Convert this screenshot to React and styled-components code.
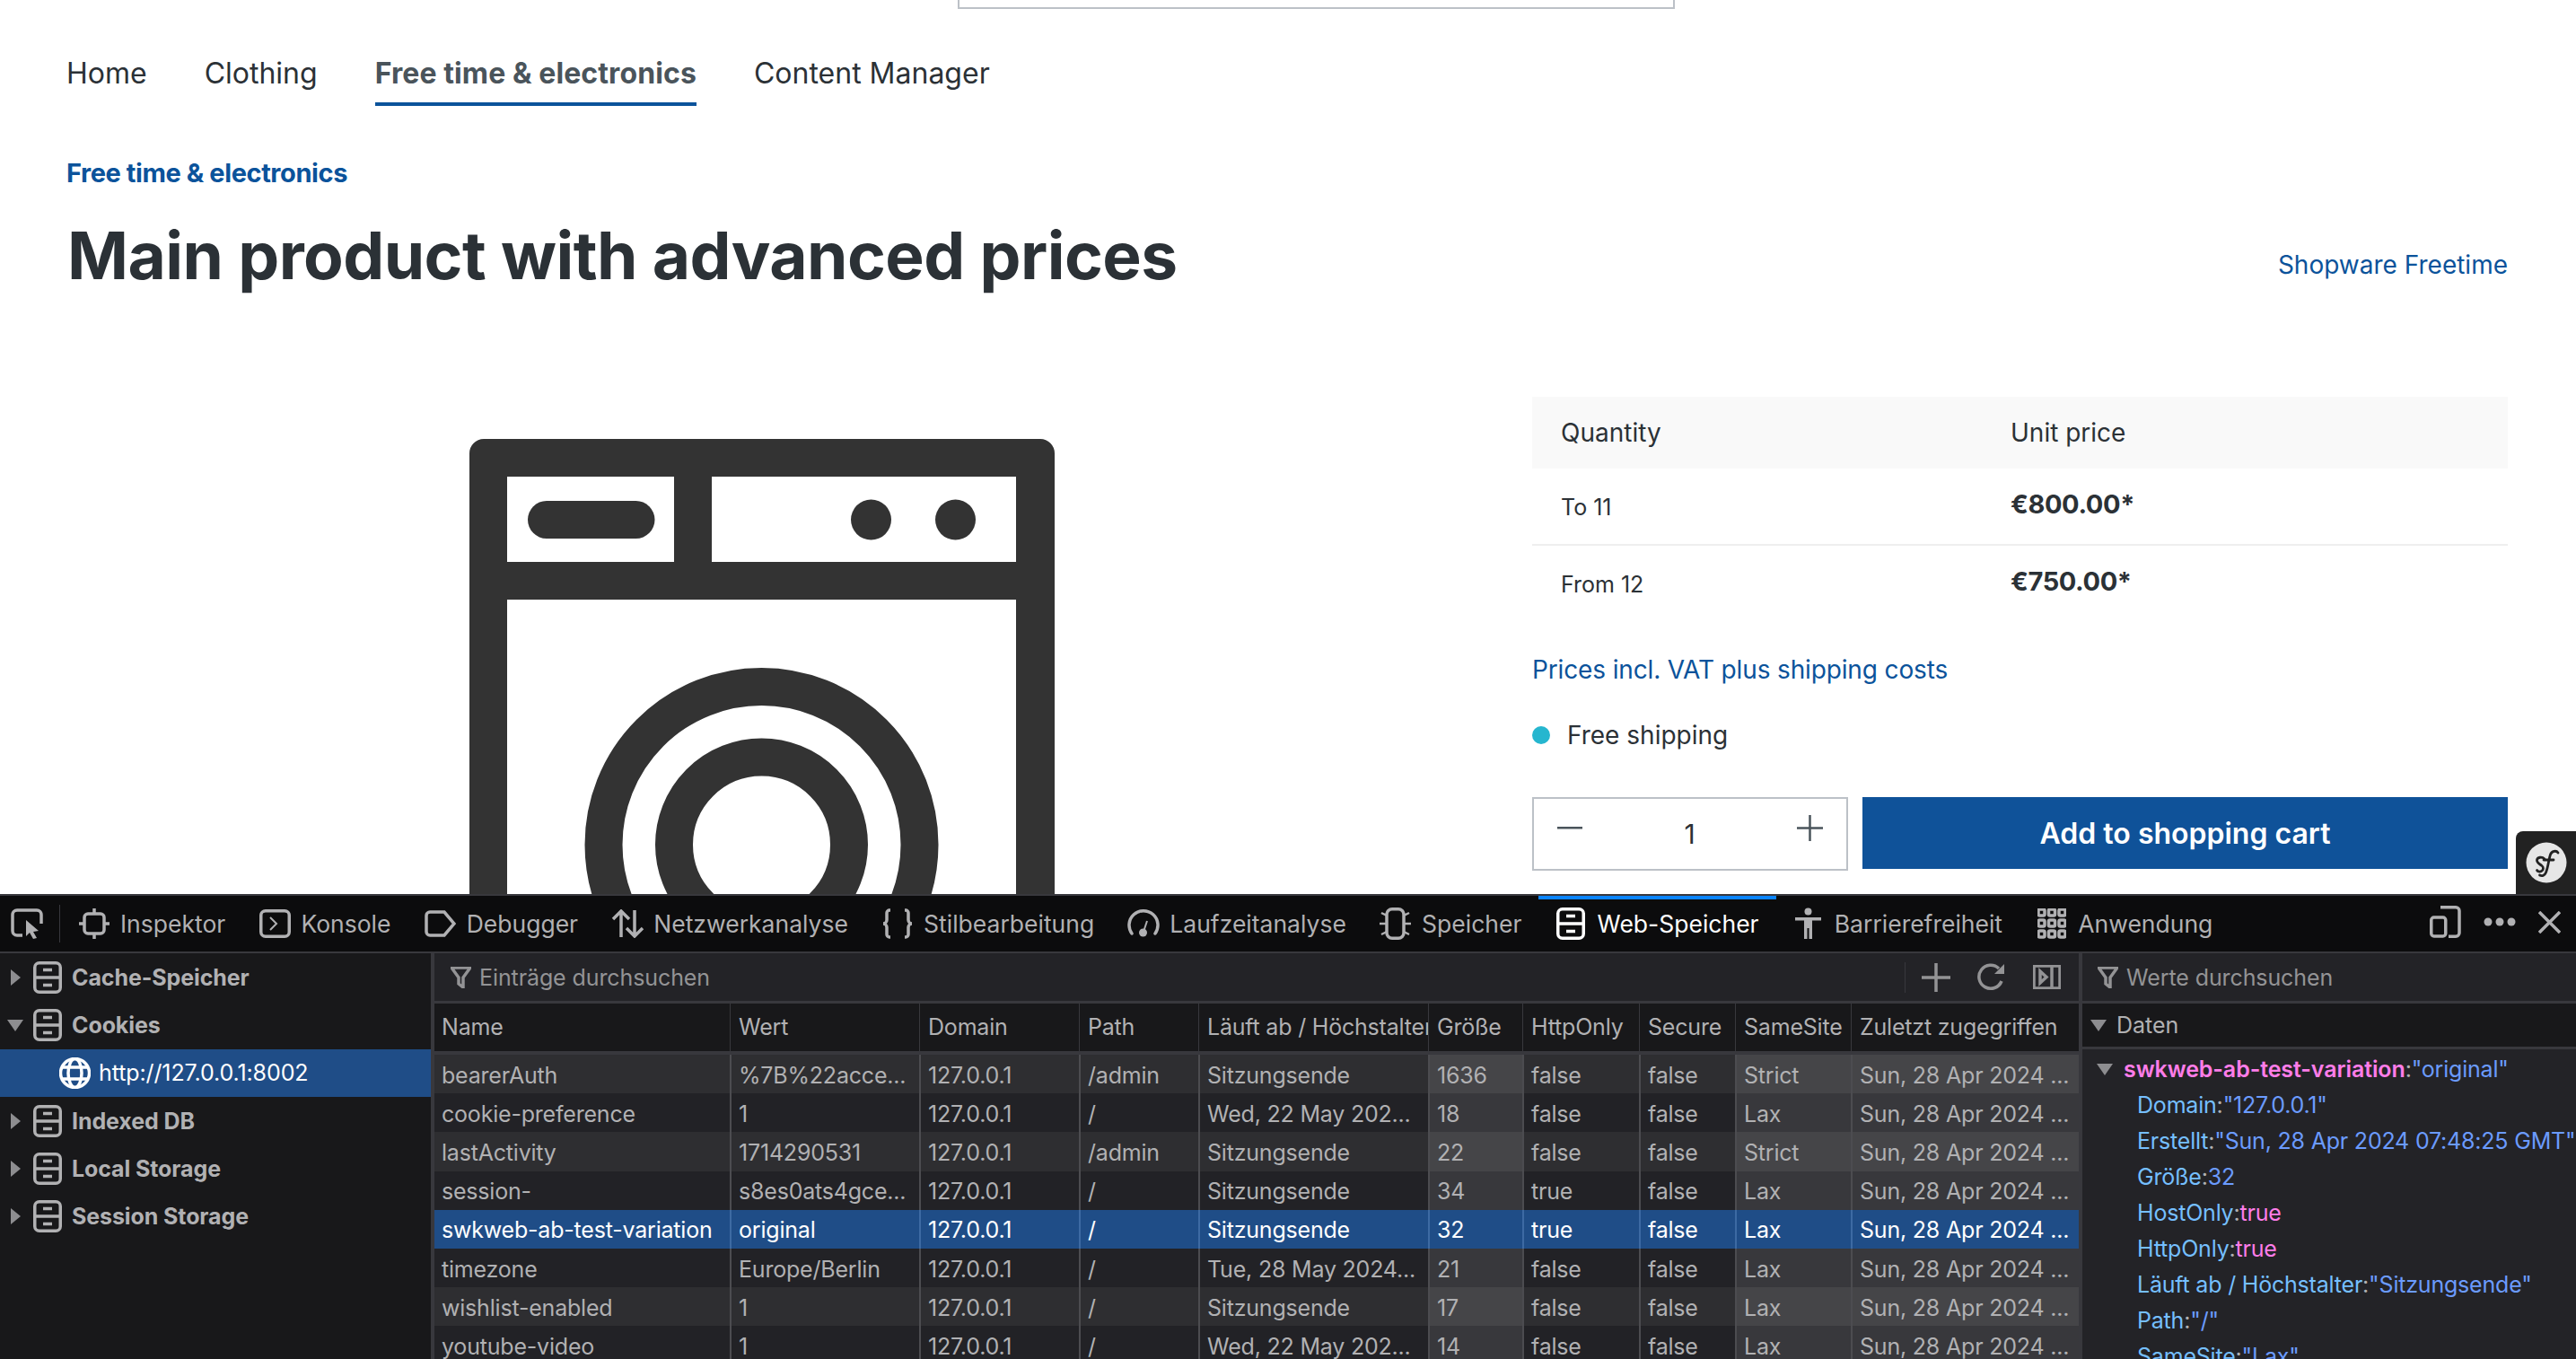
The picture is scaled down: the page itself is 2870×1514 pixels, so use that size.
import React from 'react';
import styled, { createGlobalStyle } from 'styled-components';

const GlobalStyle = createGlobalStyle`
  html, body {
    margin: 0;
    padding: 0;
    width: 2870px;
    height: 1514px;
    overflow: hidden;
    background: #fff;
    font-family: Inter, "Liberation Sans", sans-serif;
  }
  * { box-sizing: border-box; }
`;

const Page = styled.div`
  width: 2870px;
  height: 1514px;
  display: flex;
  flex-direction: column;
  overflow: hidden;
`;

/* shop page */
const Shop = styled.main`
  position: relative;
  height: 996px;
  flex: none;
  overflow: hidden;
  padding: 0 76px 0 75px;
  color: #2b3136;
`;

const SearchStub = styled.div`
  width: 799px;
  height: 10px;
  margin-left: 992px;
  border: 2.5px solid #bcc1c7;
  border-top: 0;
`;

const Nav = styled.nav`
  display: flex;
  gap: 64px;
  height: 108px;
  margin-left: -1px;
`;

const NavItem = styled.a`
  display: flex;
  align-items: center;
  height: 108px;
  padding-top: 38px;
  font-size: 32px;
  font-weight: ${(p) => (p.$active ? 700 : 400)};
  letter-spacing: ${(p) => (p.$active ? '0.1px' : '0')};
  color: ${(p) => (p.$active ? '#4a545b' : '#2b3136')};
  border-bottom: 4px solid ${(p) => (p.$active ? '#0b539b' : 'transparent')};
  white-space: nowrap;
`;

const Crumb = styled.div`
  margin: 57px 0 0 -1px;
  font-size: 29px;
  line-height: 36px;
  font-weight: 700;
  letter-spacing: -0.42px;
  color: #0b539b;
`;

const TitleRow = styled.div`
  display: flex;
  align-items: center;
  justify-content: space-between;
  margin-top: 29px;
  height: 90px;
`;

const Title = styled.h1`
  margin: 0;
  font-size: 73px;
  line-height: 90px;
  font-weight: 700;
  letter-spacing: -0.55px;
  color: #2b3136;
`;

const Maker = styled.a`
  font-size: 28px;
  margin-top: 20px;
  color: #0b539b;
`;

const Content = styled.div`
  display: flex;
  margin-top: 112px;
`;

const Gallery = styled.div`
  width: 1632px;
  flex: none;
  padding-top: 47px;
  padding-left: 448px;
`;

const Buy = styled.section`
  width: 1087px;
  flex: none;
`;

const PriceHead = styled.div`
  display: grid;
  grid-template-columns: 501px 1fr;
  align-items: center;
  height: 80px;
  padding-left: 32px;
  background: #f9f9f9;
  font-size: 28px;
`;

const PriceRow = styled.div`
  display: grid;
  grid-template-columns: 501px 1fr;
  height: ${(p) => p.$h}px;
  padding-left: 32px;
  align-items: center;
  border-bottom: ${(p) => (p.$line ? '2px solid #eeeeee' : 0)};
`;

const PriceFrom = styled.span`
  font-size: 25px;
  padding-top: 2px;
`;

const PriceValue = styled.b`
  font-size: 29px;
  font-weight: 700;
  letter-spacing: -0.4px;
  padding-bottom: 5px;
`;

const TaxLink = styled.a`
  display: block;
  margin-top: 36px;
  font-size: 28px;
  line-height: 36px;
  letter-spacing: -0.14px;
  color: #0b539b;
`;

const Delivery = styled.div`
  display: flex;
  align-items: center;
  gap: 19px;
  margin-top: 37px;
  font-size: 28px;
  line-height: 36px;
`;

const Dot = styled.i`
  width: 20px;
  height: 20px;
  border-radius: 50%;
  background: #26b6cf;
`;

const BuyRow = styled.div`
  display: flex;
  gap: 16px;
  margin-top: 51px;
`;

const Stepper = styled.div`
  position: relative;
  width: 352px;
  height: 82px;
  display: flex;
  align-items: center;
  justify-content: space-between;
  padding: 0 26px;
  border: 2.5px solid #bcc1c7;
`;

const StepValue = styled.span`
  font-size: 30px;
`;

const CartButton = styled.button`
  width: 719px;
  height: 80px;
  border: 0;
  background: #0f5299;
  color: #fff;
  font-family: inherit;
  font-size: 32px;
  font-weight: 600;
`;

const SfBar = styled.div`
  position: absolute;
  right: 0;
  bottom: 0;
  width: 67px;
  height: 70px;
  display: flex;
  align-items: center;
  justify-content: center;
  background: #222;
  border-top-left-radius: 8px;
`;

/* devtools */
const Dev = styled.section`
  flex: 1;
  display: flex;
  flex-direction: column;
  background: #18181a;
  border-top: 2px solid #38383d;
  color: #b1b1b3;
  font-size: 25px;
  overflow: hidden;
`;

const Tabs = styled.div`
  height: 64px;
  flex: none;
  display: flex;
  align-items: center;
  background: #0c0c0d;
  border-bottom: 2px solid #38383d;
  padding-left: 12px;
  font-size: 26.5px;
`;

const Pick = styled.div`
  display: flex;
  align-items: center;
  height: 42px;
  padding-right: 18px;
  margin-right: 1.8px;
  border-right: 1px solid #38383d;
`;

const Tab = styled.div`
  display: flex;
  align-items: center;
  height: 62px;
  gap: 12.2px;
  padding: 0 19px 4px;
  white-space: nowrap;
  color: ${(p) => (p.$active ? '#fff' : '#b1b1b3')};
  border-top: 4px solid ${(p) => (p.$active ? '#0a84ff' : 'transparent')};
`;

const TabIcon = styled.span`
  width: 34px;
  display: flex;
  justify-content: center;
`;

const TabEnd = styled.div`
  margin-left: auto;
  display: flex;
  align-items: center;
  gap: 25px;
  padding-right: 17px;
  padding-bottom: 4px;
`;

const Panes = styled.div`
  flex: 1;
  display: grid;
  grid-template-columns: 480px 1832px 550px;
  column-gap: 4px;
  background: #38383d;
  min-height: 0;
`;

const Tree = styled.aside`
  background: #18181a;
`;

const TreeRow = styled.div`
  height: 53.3px;
  display: flex;
  align-items: center;
  gap: ${(p) => (p.$child ? 9 : 11)}px;
  padding-left: ${(p) => (p.$child ? 66 : 8)}px;
  font-weight: ${(p) => (p.$child ? 400 : 700)};
  background: ${(p) => (p.$child ? '#1f4d87' : 'transparent')};
  color: ${(p) => (p.$child ? '#fff' : '#b1b1b3')};
  letter-spacing: -0.1px;
`;

const Column = styled.div`
  display: flex;
  flex-direction: column;
  background: #232327;
  min-width: 0;
  overflow: hidden;
`;

const SearchBar = styled.div`
  height: 56px;
  flex: none;
  display: flex;
  align-items: center;
  gap: 9px;
  padding-left: ${(p) => p.$pad}px;
  background: #232327;
  color: #939395;
  letter-spacing: -0.1px;
  border-bottom: 3px solid #38383d;
`;

const BarTools = styled.div`
  margin-left: auto;
  display: flex;
  align-items: center;
  gap: 30px;
  padding-left: 18px;
  padding-right: 20px;
  height: 34px;
  border-left: 1px solid #38383d;
`;

const TableGrid = styled.div`
  display: grid;
  grid-template-columns: 329px 211px 178px 133px 256px 105px 130px 107px 129px 254px;
  letter-spacing: -0.2px;
`;

const HeadCell = styled.div`
  height: 57px;
  display: flex;
  align-items: center;
  padding: 0 0 2px ${(p) => (p.$first ? 8 : 10)}px;
  background: #18181a;
  white-space: nowrap;
  overflow: hidden;
  border-bottom: 4px solid #38383d;
  box-shadow: inset ${(p) => (p.$first ? 0 : 1)}px 0 0 #38383d;
`;

const Cell = styled.div`
  height: 43.2px;
  display: flex;
  align-items: center;
  padding: 2px 0 0 ${(p) => (p.$first ? 8 : 10)}px;
  white-space: nowrap;
  overflow: hidden;
  background: ${(p) => {
    if (p.$selected) return '#1f4d87';
    if (p.$lit) return p.$odd ? '#454548' : '#38383c';
    return p.$odd ? '#2e2e31' : '#222226';
  }};
  color: ${(p) => (p.$selected ? '#fff' : '#b1b1b3')};
  box-shadow: inset ${(p) => (p.$first ? 0 : 2)}px 0 0 ${(p) => (p.$selected ? '#3d6aa3' : '#4c4c50')};
`;

const DataHead = styled.div`
  height: 51px;
  flex: none;
  display: flex;
  align-items: center;
  gap: 11px;
  padding-left: 9px;
  background: #18181a;
  border-bottom: 3px solid #38383d;
`;

const DataList = styled.div`
  padding-top: 2px;
  letter-spacing: -0.2px;
`;

const DataLine = styled.div`
  height: 40px;
  display: flex;
  align-items: center;
  white-space: nowrap;
  padding-left: ${(p) => (p.$root ? 16 : 61)}px;
  gap: ${(p) => (p.$root ? 12 : 0)}px;
  color: #b1b1b3;
`;

const Key = styled.span`
  color: ${(p) => (p.$root ? '#ff7de9' : '#75bfff')};
  font-weight: ${(p) => (p.$root ? 600 : 400)};
  letter-spacing: ${(p) => (p.$root ? '-0.1px' : 'inherit')};
`;

const Val = styled.span`
  color: ${(p) => (p.$bool ? '#ff7de9' : '#6b9bff')};
`;

const Ico = styled.svg`
  flex: none;
  display: block;
  fill: none;
  stroke: currentColor;
  stroke-width: 3.5;
`;

const Arrow = ({ open }) => (
  <svg width="18" height="18" viewBox="0 0 18 18" style={{ flex: 'none' }}>
    {open ? <path d="M0 3h18L9 16z" fill="#8d8d90" /> : <path d="M4 0l11 9-11 9z" fill="#8d8d90" />}
  </svg>
);

const StorageIcon = () => (
  <Ico width="32" height="36" viewBox="0 0 32 36">
    <rect x="1.750" y="1.750" width="28.500" height="32.500" rx="5" />
    <path d="M2 18h28M11 9.500h10M11 26.500h10" />
  </Ico>
);

const PickIcon = () => (
  <Ico width="36" height="34" viewBox="0 0 36 34">
    <path d="M13 30H7a5 5 0 0 1-5-5V7a5 5 0 0 1 5-5h22a5 5 0 0 1 5 5v10" />
    <path d="M17 13l14 12-6 1 4 7-4 1-4-7-4 4z" fill="currentColor" stroke="none" />
  </Ico>
);

const InspectorIcon = () => (
  <Ico width="34" height="34" viewBox="0 0 34 34">
    <rect x="6" y="6" width="22" height="22" rx="4" />
    <path d="M17 0v6M17 28v6M0 17h6M28 17h6" />
  </Ico>
);

const ConsoleIcon = () => (
  <Ico width="35" height="32" viewBox="0 0 35 32">
    <rect x="1.750" y="1.750" width="31.500" height="28.500" rx="5" />
    <path d="M12 9l7 7-7 7" strokeWidth="2" />
  </Ico>
);

const DebuggerIcon = () => (
  <Ico width="35" height="30" viewBox="0 0 35 30">
    <path d="M6 2h16l11 13-11 13H6a4 4 0 0 1-4-4V6a4 4 0 0 1 4-4z" />
  </Ico>
);

const NetworkIcon = () => (
  <Ico width="37" height="32" viewBox="0 0 37 32">
    <path d="M11 31V2M2 11l9-9 9 9M26 1v29M17 21l9 9 9-9" />
  </Ico>
);

const BracesIcon = () => (
  <Ico width="34" height="34" viewBox="0 0 34 34">
    <path d="M9 2H8a3 3 0 0 0-3 3v8c0 2-2 4-4 4 2 0 4 2 4 4v8a3 3 0 0 0 3 3h1M25 2h1a3 3 0 0 1 3 3v8c0 2 2 4 4 4-2 0-4 2-4 4v8a3 3 0 0 1-3 3h-1" />
  </Ico>
);

const GaugeIcon = () => (
  <Ico width="36" height="34" viewBox="0 0 36 34">
    <path d="M5 28A16 16 0 1 1 31 28" strokeLinecap="round" />
    <path d="M18 26l4-12" strokeWidth="2" />
    <circle cx="17.500" cy="27" r="4.500" fill="currentColor" stroke="none" />
  </Ico>
);

const MemoryIcon = () => (
  <Ico width="37" height="36" viewBox="0 0 37 36">
    <rect x="9" y="1.750" width="19" height="32.500" rx="6" />
    <path d="M9 9L3 6M9 18H1M9 27l-6 3M28 9l6-3M28 18h8M28 27l6 3" strokeWidth="2.500" />
  </Ico>
);

const AccessIcon = () => (
  <svg width="31" height="36" viewBox="0 0 31 36" fill="currentColor" style={{ flex: 'none' }}>
    <circle cx="15.500" cy="4.500" r="4" />
    <path d="M1 11h29v3.500H20V35h-3.500V23h-2v12H11V14.500H1z" />
  </svg>
);

const AppIcon = () => (
  <Ico width="32" height="34" viewBox="0 0 32 34" strokeWidth="2">
    {[1, 12.500, 24].map((x) =>
      [1, 13, 25].map((y) => <rect key={`${x}-${y}`} x={x} y={y} width="7" height="7" rx="1.500" />)
    )}
  </Ico>
);

const DeviceIcon = () => (
  <Ico width="35" height="36" viewBox="0 0 35 36">
    <path d="M12 1.750h17a4 4 0 0 1 4 4v24.500a4 4 0 0 1-4 4H21" />
    <rect x="1.750" y="13" width="16" height="21" rx="3" />
  </Ico>
);

const DotsIcon = () => (
  <svg width="36" height="10" viewBox="0 0 36 10" fill="currentColor" style={{ flex: 'none' }}>
    <circle cx="5" cy="5" r="4.500" />
    <circle cx="18" cy="5" r="4.500" />
    <circle cx="31" cy="5" r="4.500" />
  </svg>
);

const CloseIcon = () => (
  <Ico width="25" height="25" viewBox="0 0 25 25" strokeWidth="3">
    <path d="M1 1l23 23M24 1L1 24" />
  </Ico>
);

const FilterIcon = () => (
  <Ico width="23" height="24" viewBox="0 0 23 24" strokeWidth="2">
    <path d="M1 1h21l-8 11v11l-5-4v-7z" />
  </Ico>
);

const GlobeIcon = () => (
  <Ico width="35" height="35" viewBox="0 0 35 35" strokeWidth="3">
    <circle cx="17.500" cy="17.500" r="16" />
    <ellipse cx="17.500" cy="17.500" rx="7.500" ry="16" />
    <path d="M3 11h29M3 24h29" />
  </Ico>
);

const PlusIcon = () => (
  <Ico width="32" height="32" viewBox="0 0 32 32">
    <path d="M16 0v32M0 16h32" />
  </Ico>
);

const ReloadIcon = () => (
  <Ico width="32" height="32" viewBox="0 0 32 32">
    <path d="M27 20a13 13 0 1 1-3-14" />
    <path d="M30 1v11H19z" fill="currentColor" stroke="none" />
  </Ico>
);

const SideIcon = () => (
  <Ico width="31" height="27" viewBox="0 0 31 27" strokeWidth="2">
    <rect x="1" y="1" width="29" height="25" />
    <path d="M21 1v25M8 7l7 6.500L8 20z" />
  </Ico>
);

const Washer = () => (
  <svg width="652" height="640" viewBox="0 0 652 640" style={{ display: 'block' }}>
    <path
      fillRule="evenodd"
      fill="#333"
      d="M16 0h620a16 16 0 0 1 16 16v624H0V16A16 16 0 0 1 16 0zM42 42v95h186V42zM270 42v95h339V42zM42 179v461h567V179z"
    />
    <rect x="65" y="69" width="141.500" height="42" rx="21" fill="#333" />
    <circle cx="447.500" cy="90" r="22.500" fill="#333" />
    <circle cx="541.500" cy="90" r="22.500" fill="#333" />
    <circle cx="325.500" cy="452" r="176" fill="none" stroke="#333" strokeWidth="42" />
    <circle cx="325.500" cy="452" r="97.500" fill="none" stroke="#333" strokeWidth="42" />
  </svg>
);

const SfLogo = () => (
  <svg width="46" height="46" viewBox="0 0 46 46">
    <circle cx="23" cy="23" r="22.500" fill="#e6e6e6" />
    <path
      fill="none"
      stroke="#222"
      strokeWidth="2.800"
      strokeLinecap="round"
      d="M36 12c-2-3-7-2-8.500 2-1.800 5-2.500 14-5 20-1.200 3-4 4.500-7 3M21 19c-3-3-8-2-8.500 1-.5 3 3 4.500 5.500 6.500 2 1.500 2 5-.5 6-2 1-4.500.5-5-1M20 20h11"
    />
  </svg>
);

const Minus = () => (
  <svg width="28" height="3" viewBox="0 0 28 3" style={{ marginBottom: 14 }}>
    <rect width="28" height="2.500" fill="#4a545b" />
  </svg>
);

const Plus = () => (
  <svg width="29" height="29" viewBox="0 0 29 29" style={{ marginBottom: 14 }}>
    <path d="M14.500 0v29M0 14.500h29" stroke="#4a545b" strokeWidth="2.500" />
  </svg>
);

const NAV = ['Home', 'Clothing', 'Free time & electronics', 'Content Manager'];

const TABS = [
  ['Inspektor', InspectorIcon],
  ['Konsole', ConsoleIcon],
  ['Debugger', DebuggerIcon],
  ['Netzwerkanalyse', NetworkIcon],
  ['Stilbearbeitung', BracesIcon],
  ['Laufzeitanalyse', GaugeIcon],
  ['Speicher', MemoryIcon],
  ['Web-Speicher', StorageIcon, true],
  ['Barrierefreiheit', AccessIcon],
  ['Anwendung', AppIcon],
];

const HEADS = ['Name', 'Wert', 'Domain', 'Path', 'Läuft ab / Höchstalter', 'Größe', 'HttpOnly', 'Secure', 'SameSite', 'Zuletzt zugegriffen'];

const LAST = 'Sun, 28 Apr 2024 ...';
const ROWS = [
  ['bearerAuth', '%7B%22acce...', '127.0.0.1', '/admin', 'Sitzungsende', '1636', 'false', 'false', 'Strict', LAST],
  ['cookie-preference', '1', '127.0.0.1', '/', 'Wed, 22 May 202...', '18', 'false', 'false', 'Lax', LAST],
  ['lastActivity', '1714290531', '127.0.0.1', '/admin', 'Sitzungsende', '22', 'false', 'false', 'Strict', LAST],
  ['session-', 's8es0ats4gce...', '127.0.0.1', '/', 'Sitzungsende', '34', 'true', 'false', 'Lax', LAST],
  ['swkweb-ab-test-variation', 'original', '127.0.0.1', '/', 'Sitzungsende', '32', 'true', 'false', 'Lax', LAST],
  ['timezone', 'Europe/Berlin', '127.0.0.1', '/', 'Tue, 28 May 2024...', '21', 'false', 'false', 'Lax', LAST],
  ['wishlist-enabled', '1', '127.0.0.1', '/', 'Sitzungsende', '17', 'false', 'false', 'Lax', LAST],
  ['youtube-video', '1', '127.0.0.1', '/', 'Wed, 22 May 202...', '14', 'false', 'false', 'Lax', LAST],
];

const LIT_COLUMNS = [5, 8, 9];

const DATA = [
  ['Domain', '"127.0.0.1"'],
  ['Erstellt', '"Sun, 28 Apr 2024 07:48:25 GMT"'],
  ['Größe', '32'],
  ['HostOnly', 'true', true],
  ['HttpOnly', 'true', true],
  ['Läuft ab / Höchstalter', '"Sitzungsende"'],
  ['Path', '"/"'],
  ['SameSite', '"Lax"'],
];

export default function App() {
  return (
    <Page>
      <GlobalStyle />
      <Shop>
        <SearchStub />
        <Nav>
          {NAV.map((item) => (
            <NavItem key={item} $active={item === 'Free time & electronics'}>
              {item}
            </NavItem>
          ))}
        </Nav>
        <Crumb>Free time &amp; electronics</Crumb>
        <TitleRow>
          <Title>Main product with advanced prices</Title>
          <Maker>Shopware Freetime</Maker>
        </TitleRow>
        <Content>
          <Gallery>
            <Washer />
          </Gallery>
          <Buy>
            <PriceHead>
              <span>Quantity</span>
              <span>Unit price</span>
            </PriceHead>
            <PriceRow $h={86} $line>
              <PriceFrom>To 11</PriceFrom>
              <PriceValue>€800.00*</PriceValue>
            </PriceRow>
            <PriceRow $h={84}>
              <PriceFrom>From 12</PriceFrom>
              <PriceValue>€750.00*</PriceValue>
            </PriceRow>
            <TaxLink>Prices incl. VAT plus shipping costs</TaxLink>
            <Delivery>
              <Dot />
              Free shipping
            </Delivery>
            <BuyRow>
              <Stepper>
                <Minus />
                <StepValue>1</StepValue>
                <Plus />
              </Stepper>
              <CartButton>Add to shopping cart</CartButton>
            </BuyRow>
          </Buy>
        </Content>
        <SfBar>
          <SfLogo />
        </SfBar>
      </Shop>
      <Dev>
        <Tabs>
          <Pick>
            <PickIcon />
          </Pick>
          {TABS.map(([label, Icon, active]) => (
            <Tab key={label} $active={active}>
              <TabIcon>
                <Icon />
              </TabIcon>
              {label}
            </Tab>
          ))}
          <TabEnd>
            <DeviceIcon />
            <DotsIcon />
            <CloseIcon />
          </TabEnd>
        </Tabs>
        <Panes>
          <Tree>
            {['Cache-Speicher', 'Cookies'].map((label) => (
              <TreeRow key={label}>
                <Arrow open={label === 'Cookies'} />
                <StorageIcon />
                {label}
              </TreeRow>
            ))}
            <TreeRow $child>
              <GlobeIcon />
              http://127.0.0.1:8002
            </TreeRow>
            {['Indexed DB', 'Local Storage', 'Session Storage'].map((label) => (
              <TreeRow key={label}>
                <Arrow />
                <StorageIcon />
                {label}
              </TreeRow>
            ))}
          </Tree>
          <Column>
            <SearchBar $pad={18}>
              <FilterIcon />
              Einträge durchsuchen
              <BarTools>
                <PlusIcon />
                <ReloadIcon />
                <SideIcon />
              </BarTools>
            </SearchBar>
            <TableGrid>
              {HEADS.map((head, i) => (
                <HeadCell key={head} $first={i === 0}>
                  {head}
                </HeadCell>
              ))}
              {ROWS.map((row, r) =>
                row.map((value, c) => (
                  <Cell
                    key={`${r}-${c}`}
                    $first={c === 0}
                    $odd={r % 2 === 0}
                    $selected={r === 4}
                    $lit={LIT_COLUMNS.includes(c)}
                  >
                    {value}
                  </Cell>
                ))
              )}
            </TableGrid>
          </Column>
          <Column>
            <SearchBar $pad={17}>
              <FilterIcon />
              Werte durchsuchen
            </SearchBar>
            <DataHead>
              <Arrow open />
              Daten
            </DataHead>
            <DataList>
              <DataLine $root>
                <Arrow open />
                <span>
                  <Key $root>swkweb-ab-test-variation</Key>:<Val>"original"</Val>
                </span>
              </DataLine>
              {DATA.map(([key, value, bool]) => (
                <DataLine key={key}>
                  <Key>{key}</Key>:<Val $bool={bool}>{value}</Val>
                </DataLine>
              ))}
            </DataList>
          </Column>
        </Panes>
      </Dev>
    </Page>
  );
}
